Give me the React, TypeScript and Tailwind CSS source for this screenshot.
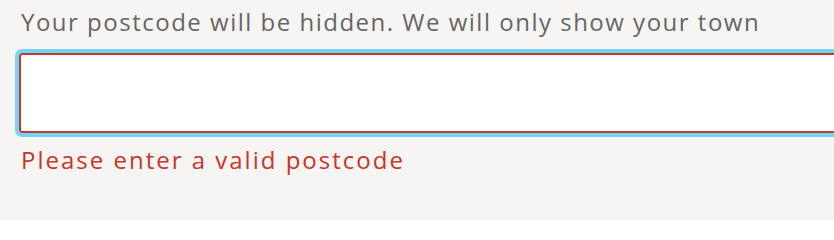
import { useState } from "react"

export default function App() {
  const [postcode, setPostcode] = useState("")

  return (
    <div className="h-[220px] w-full overflow-hidden bg-[#f6f5f3] pl-[19px] pt-[5px] font-['Open_Sans','Noto_Sans',sans-serif]">
      <label htmlFor="postcode" className="block pl-[2px] text-[24px] leading-[34px] tracking-[1.5px] text-[#666666]">
        Your postcode will be hidden. We will only show your town
      </label>
      <input
        id="postcode"
        type="text"
        value={postcode}
        onChange={(e) => setPostcode(e.target.value)}
        className="mt-[14px] block h-[80px] w-[840px] rounded-[3px] border-2 border-[#cc3329] bg-white px-3 text-[24px] outline-4 outline-[#6fd6f7] outline-solid"
      />
      <p className="mt-[10px] pl-[2px] text-[24px] leading-[34px] tracking-[2px] text-[#cc3329]">Please enter a valid postcode</p>
    </div>
  )
}
